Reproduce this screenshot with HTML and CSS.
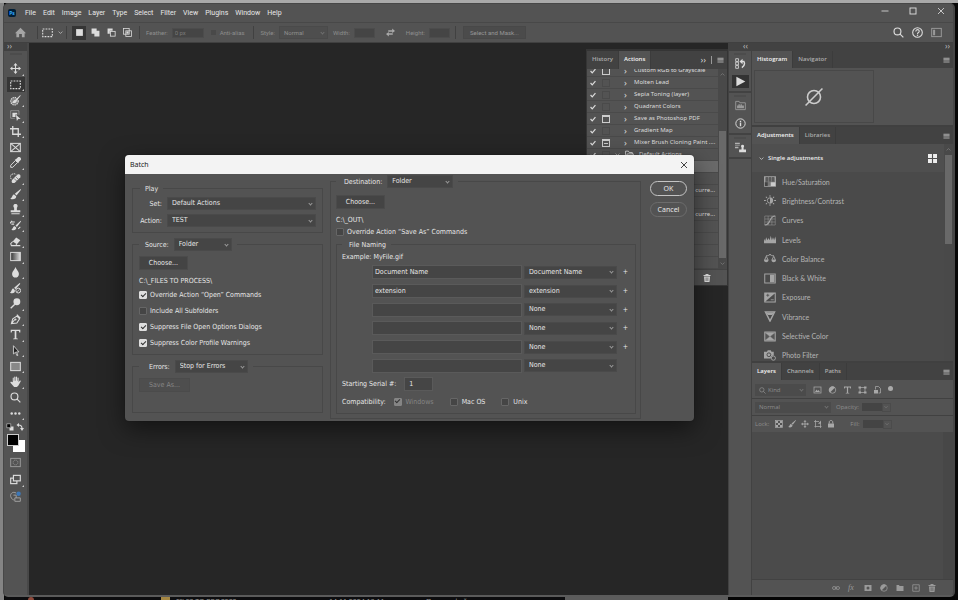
FILE: index.html
```
<!DOCTYPE html>
<html lang="en">
<head>
<meta charset="utf-8">
<title>Batch</title>
<link rel="stylesheet" href="styles.css">
</head>
<body>
<svg class="sprite" aria-hidden="true">
  <symbol id="i-home" viewBox="0 0 16 16"><path d="M8 1 0 9h2v6h4v-5h4v5h4V9h2z" fill="currentColor"/></symbol>
  <symbol id="i-marquee" viewBox="0 0 16 16"><rect x="1" y="3" width="14" height="11" fill="none" stroke="currentColor" stroke-width="1.6" stroke-dasharray="2.6 1.6"/></symbol>
  <symbol id="i-new" viewBox="0 0 16 16"><rect x="2" y="2" width="12" height="12" fill="currentColor"/></symbol>
  <symbol id="i-add" viewBox="0 0 16 16"><path d="M1 1h9v4h5v10H6v-5H1z" fill="currentColor"/></symbol>
  <symbol id="i-sub" viewBox="0 0 16 16"><path d="M1 1h9v4H5v5H1z" fill="currentColor"/><rect x="6" y="6" width="8.500" height="8.500" fill="none" stroke="currentColor" stroke-width="1.500"/></symbol>
  <symbol id="i-cross" viewBox="0 0 16 16"><g fill="none" stroke="currentColor" stroke-width="1.400"><rect x="1" y="1" width="10" height="10"/><rect x="5" y="5" width="10" height="10"/></g><path d="M6 6h4v4H6z" fill="currentColor"/></symbol>
  <symbol id="i-swap" viewBox="0 0 16 16"><path d="M4 4h7V1l5 4.500L11 9V6.500H4zM12 12H5v3l-5-4.500L5 7v2.500h7z" fill="currentColor"/></symbol>
  <symbol id="i-search" viewBox="0 0 16 16"><g fill="none" stroke="currentColor" stroke-width="1.700"><circle cx="6.500" cy="6.500" r="5"/><path d="m10 10 5 5"/></g></symbol>
  <symbol id="i-help" viewBox="0 0 16 16"><g fill="none" stroke="currentColor" stroke-width="1.600"><circle cx="8" cy="8" r="7"/><path d="M5.500 6.500C5.500 3 10.500 3 10.500 6c0 2-2.500 2-2.500 4"/></g><circle cx="8" cy="12" r="1.100" fill="currentColor"/></symbol>
  <symbol id="i-layout" viewBox="0 0 16 16"><rect x="1" y="2" width="14" height="12" fill="none" stroke="currentColor" stroke-width="1.400"/><path d="M3 4h3v8H3z" fill="currentColor"/></symbol>
  <symbol id="i-down" viewBox="0 0 16 16"><path d="m2 5 6 6 6-6" fill="none" stroke="currentColor" stroke-width="2"/></symbol>
  <symbol id="i-close" viewBox="0 0 16 16"><path d="m2 2 12 12M14 2 2 14" fill="none" stroke="currentColor" stroke-width="1.700"/></symbol>
  <symbol id="i-min" viewBox="0 0 16 16"><path d="M1 8h14" fill="none" stroke="currentColor" stroke-width="1.700"/></symbol>
  <symbol id="i-max" viewBox="0 0 16 16"><rect x="2" y="2" width="12" height="12" fill="none" stroke="currentColor" stroke-width="1.900"/></symbol>
  <symbol id="i-menu" viewBox="0 0 16 16"><path d="M1 3h14v2H1zm0 3h14v2H1zm0 3h14v2H1zm0 3h14v1.500H1z" fill="currentColor"/></symbol>

  <symbol id="t-move" viewBox="0 0 16 16"><path d="M8 0 5 3.500h2.200v3.700H3.500V5L0 8l3.500 3V8.800h3.700v3.700H5L8 16l3-3.500H8.800V8.800h3.700V11L16 8l-3.500-3v2.200H8.800V3.500H11z" fill="currentColor"/></symbol>
  <symbol id="t-quick" viewBox="0 0 16 16"><circle cx="6.500" cy="9" r="5.500" fill="currentColor" fill-opacity=".35" stroke="currentColor" stroke-width="1.600" stroke-dasharray="2 1.200"/><path d="M15 0 8 7c-2 0-3 2-5 4 4 2 7 0 7-3l5.500-7z" fill="currentColor"/></symbol>
  <symbol id="t-object" viewBox="0 0 16 16"><path d="M1 1h12v6M7 12H1V1" fill="none" stroke="currentColor" stroke-width="1" opacity=".6"/><path d="M3.500 4h7v3L8 6v4H3.500zM8.500 7l7 6h-3.500L10 16z" fill="currentColor"/></symbol>
  <symbol id="t-crop" viewBox="0 0 16 16"><path d="M4 0v12h12M0 4h12v12" fill="none" stroke="currentColor" stroke-width="1.900"/></symbol>
  <symbol id="t-frame" viewBox="0 0 16 16"><g fill="none" stroke="currentColor" stroke-width="1.500"><rect x="1" y="2" width="14" height="12"/><path d="m1 2 14 12M15 2 1 14"/></g></symbol>
  <symbol id="t-dropper" viewBox="0 0 16 16"><path d="M1 15v-3l7-7 3 3-7 7z" fill="none" stroke="currentColor" stroke-width="1.400"/><path d="m7 4 2-1 3-3c2-1 5 2 4 4l-3 3-1 2z" fill="currentColor"/></symbol>
  <symbol id="t-heal" viewBox="0 0 16 16"><path d="M2 9 0 6l2-4 4-1 3 1" fill="none" stroke="currentColor" stroke-width="1.400" stroke-dasharray="2 1"/><path d="M4 9l7-7c3-1 5 1 4 4l-8 8c-3 2-6-1-4-4z" fill="currentColor"/><path d="m6 8 4 4M9 6l3 3" stroke="#535353"/></symbol>
  <symbol id="t-brush" viewBox="0 0 16 16"><path d="M15.500 0 7 7l2.500 2.500L16 1zM6 8c-3 0-2 4-5.500 6 4 2 9 0 8.500-3.500z" fill="currentColor"/></symbol>
  <symbol id="t-stamp" viewBox="0 0 16 16"><path d="M8 0c3 0 4 3 2 5.500V9h5v3H1V9h5V5.500C4 3 5 0 8 0zM2 13.500h12V15H2z" fill="currentColor"/></symbol>
  <symbol id="t-history" viewBox="0 0 16 16"><path d="M15.500 1 8 8l2 2 6-8zM7 9c-3 0-2 3-5 5 4 2 8 0 7-3z" fill="currentColor"/><path d="M1 3h6M2 6h4M0 5l3-4M12 13l3-3" stroke="currentColor" stroke-width="1.500"/></symbol>
  <symbol id="t-eraser" viewBox="0 0 16 16"><path d="m9 2 6 4-5 6-6-4z" fill="currentColor"/><path d="m4 8-3 3 1 3h6l2-2M8 14h7" fill="none" stroke="currentColor" stroke-width="1.500"/></symbol>
  <linearGradient id="ramp"><stop stop-color="#333"/><stop offset="1" stop-color="#ddd"/></linearGradient>
  <symbol id="t-gradient" viewBox="0 0 16 16"><rect x="1" y="2" width="14" height="12" fill="url(#ramp)" stroke="currentColor" stroke-width="1.400"/></symbol>
  <symbol id="t-drop" viewBox="0 0 16 16"><path d="M8 0c1 4 5 6 5 10 0 7-10 7-10 0 0-4 4-6 5-10z" fill="currentColor"/></symbol>
  <symbol id="t-mixer" viewBox="0 0 16 16"><path d="M14 0 6 7l2 2 7-8zM5 8c-3 0-2 4-5 6 4 2 8 0 7-3.500z" fill="currentColor"/><circle cx="12" cy="11" r="3.500" fill="none" stroke="currentColor" stroke-width="1.400"/><path d="m10 13 4-4" stroke="currentColor"/></symbol>
  <symbol id="t-dodge" viewBox="0 0 16 16"><circle cx="10" cy="5.500" r="5" fill="currentColor"/><path d="m7 9-6 6" stroke="currentColor" stroke-width="2"/></symbol>
  <symbol id="t-pen" viewBox="0 0 16 16"><path d="M2 14 4 7l6-4 4 4-4 6zl5-6M10 1l5 5" fill="none" stroke="currentColor" stroke-width="1.500"/><circle cx="8" cy="8" r="1.500" fill="currentColor"/></symbol>
  <symbol id="t-type" viewBox="0 0 16 16"><path d="M1 1h14v4h-1.500L13 3H9.200v10.500l2.300.5v1H4.500v-1l2.300-.5V3H3l-.5 2H1z" fill="currentColor"/></symbol>
  <symbol id="t-path" viewBox="0 0 16 16"><path d="m5 1 8 9H9.500l2 5-1.500.500-2-5L5 13z" fill="#222" stroke="currentColor" stroke-width="1.200"/></symbol>
  <symbol id="t-rect" viewBox="0 0 16 16"><rect x="1" y="2" width="14" height="12" fill="#888" stroke="currentColor" stroke-width="1.500"/></symbol>
  <symbol id="t-hand" viewBox="0 0 16 16"><path d="M4 9V3c0-1 1.500-1 1.500 0v4h.7V1.500c0-1.200 1.700-1.200 1.700 0V7h.7V1.500c0-1.200 1.700-1 1.700 0V7h.7V3c0-1 1.500-1 1.500 0v6l1.500-2c1-1 2 0 1.500 1L12 14l-2 2H6L1 10c-1-1 0-2 1-1.500z" fill="currentColor"/></symbol>
  <symbol id="t-dots" viewBox="0 0 16 16"><g fill="currentColor"><circle cx="2.500" cy="8" r="1.800"/><circle cx="8" cy="8" r="1.800"/><circle cx="13.500" cy="8" r="1.800"/></g></symbol>
  <symbol id="t-default" viewBox="0 0 16 16"><path d="M7 7h8v8H7z" fill="#ddd"/><path d="M1.500 1.500h8v8h-8z" fill="#000" stroke="#bbb" stroke-width="1.500"/></symbol>
  <symbol id="t-flip" viewBox="0 0 16 16"><path d="M5 4c5 0 7 2 7 7" fill="none" stroke="currentColor" stroke-width="2.200"/><path d="M6 0v8L1 4zM8 10h8l-4 6z" fill="currentColor"/></symbol>
  <symbol id="t-mask" viewBox="0 0 16 16"><rect x="1" y="2" width="14" height="12" fill="none" stroke="currentColor" stroke-width="1.400"/><circle cx="8" cy="8" r="3.500" fill="none" stroke="currentColor" stroke-width="1.300" stroke-dasharray="1.500 1"/></symbol>
  <symbol id="t-screen" viewBox="0 0 16 16"><g fill="#535353" stroke="currentColor" stroke-width="1.700"><rect x="1" y="6" width="9" height="8"/><rect x="5" y="2" width="10" height="8"/></g></symbol>
  <symbol id="t-share" viewBox="0 0 16 16"><path d="M9 3C4 0 0 4 1 8s4 5 5 5M5 6h4v4M7 15v-5h8v5z" fill="none" stroke="#a0a0a0" stroke-width="1.400"/><circle cx="12.500" cy="4" r="3.200" fill="#3d78b8"/></symbol>

  <symbol id="d-history" viewBox="0 0 16 16"><path d="M1 1h4v4H1zm0 5h4v4H1zm0 5h4v4H1z" fill="none" stroke="currentColor" stroke-width="1.200"/><path d="M9 5h4c2 4 0 7-3 9" fill="none" stroke="currentColor" stroke-width="2"/><path d="M11 1v8L6.500 5z" fill="currentColor"/></symbol>
  <symbol id="d-play" viewBox="0 0 16 16"><path d="M2 1v14l13-7z" fill="currentColor"/></symbol>
  <symbol id="d-library" viewBox="0 0 16 16"><path d="M1 14V2h5l1 2h8v10z" fill="none" stroke="currentColor" stroke-width="1.300"/><path d="M3 12V8h2V6h2v2h1V6h2v2h3v4z" fill="currentColor"/></symbol>
  <symbol id="d-info" viewBox="0 0 16 16"><circle cx="8" cy="8" r="6.800" fill="none" stroke="currentColor" stroke-width="1.400"/><path d="M7 7h2v5H7zM7 4h2v2H7z" fill="currentColor"/></symbol>
  <symbol id="d-clone" viewBox="0 0 16 16"><path d="M11 4c2 0 3 2 1.500 4v3H16v4H6v-4h3.500V8C8 6 9 4 11 4z" fill="currentColor"/><path d="M0 1h7v2H0zm0 3h7v1H0zm0 3h5v2H0z" fill="currentColor" opacity=".7"/></symbol>
  <symbol id="i-trash" viewBox="0 0 16 16"><path d="M5 2V0h6v2h4v2H1V2zM2 5h12l-1 11H3z" fill="currentColor"/><path d="M6 7v7M8 7v7M10 7v7" stroke="#555"/></symbol>
  <symbol id="i-folder" viewBox="0 0 16 16"><path d="M1 14V2h5l1.500 2.500H13V7M1 14 4 7h11l-2 7z" fill="none" stroke="currentColor" stroke-width="1.500"/></symbol>
  <symbol id="i-tick" viewBox="0 0 16 16"><path d="m1.500 8 4.500 5L14.500 3" fill="none" stroke="currentColor" stroke-width="3.200"/></symbol>
  <symbol id="i-none" viewBox="0 0 16 16"><g fill="none" stroke="currentColor" stroke-width="1.400"><circle cx="8" cy="8" r="5.800"/><path d="M.5 15.500 15.500.5"/></g></symbol>
  <symbol id="i-grid" viewBox="0 0 16 16"><path d="M0 0h7v7H0zm9 0h7v7H9zM0 9h7v7H0zm9 0h7v7H9z" fill="currentColor"/></symbol>

  <symbol id="a-hue" viewBox="0 0 16 14"><rect x=".7" y=".7" width="14.600" height="12.600" fill="#777" stroke="currentColor" stroke-width="1.300"/><path d="M4 1v6M8 1v6M12 1v6" stroke="#444" stroke-width="1.500"/><path d="M9 8h6v5H9z" fill="#ccc"/><path d="M1 8h4v5H1z" fill="#444"/></symbol>
  <symbol id="a-bright" viewBox="0 0 16 14"><circle cx="8" cy="7" r="3.600" fill="none" stroke="currentColor" stroke-width="1.200"/><path d="M8 3a4 4 0 0 1 0 8z" fill="currentColor"/><path d="M8 0v2M8 12v2M0 7h2.500M13.500 7H16M2.500 2l1.500 1.500M12 10.500l1.500 1.500M2.500 12 4 10.500M12 3.500 13.500 2" stroke="currentColor" stroke-width="1.400"/></symbol>
  <symbol id="a-curves" viewBox="0 0 16 14"><g fill="none" stroke="currentColor"><path d="M1 1h14v12H1zM1 5h14M1 9h14M5.500 1v12M10.500 1v12" opacity=".6"/><path d="M1 13c9 0 5-12 14-12" stroke-width="1.500"/></g></symbol>
  <symbol id="a-levels" viewBox="0 0 16 14"><path d="M0 12V6l1.500 3L3 4l1.500 4L6 5l1.500 3L9 2l1.500 6L12 4l1.500 4L15 3l1 4v5z" fill="currentColor"/></symbol>
  <symbol id="a-balance" viewBox="0 0 16 14"><path d="M3 3c3 1 4-1 5-2 1 1 2 3 5 2M8 1v2M3 4 .8 9h4.700zM13 4l-2.500 5h4.700z" fill="none" stroke="currentColor" stroke-width="1.300"/><path d="M0 9h6c0 4-6 4-6 0zM10 9h6c0 4-6 4-6 0z" fill="currentColor"/></symbol>
  <symbol id="a-bw" viewBox="0 0 16 14"><rect x="1" y="1" width="14" height="12" fill="none" stroke="currentColor" stroke-width="1.300"/><path d="M8 2h6v10H8z" fill="currentColor"/></symbol>
  <symbol id="a-exposure" viewBox="0 0 16 14"><rect x="1" y="1" width="14" height="12" fill="none" stroke="currentColor" stroke-width="1.400"/><path d="M1 13V1h14z" fill="currentColor"/><path d="M3 4h4M5 2v4" stroke="#4a4a4a"/><path d="M9 10h4" stroke="currentColor"/></symbol>
  <symbol id="a-vibrance" viewBox="0 0 16 14"><path d="M2 1h12L8 13z" fill="none" stroke="currentColor" stroke-width="2"/><path d="M3 2h10l-2 3H5z" fill="currentColor"/></symbol>
  <symbol id="a-selective" viewBox="0 0 16 14"><rect x="1" y="1" width="14" height="12" fill="#777" stroke="currentColor" stroke-width="1.300"/><path d="m2 2 6 5 6-5zM2 12l6-5 6 5z" fill="currentColor"/><path d="M2 3v8l5-4zm12 0v8L9 7z" fill="#555"/></symbol>
  <symbol id="a-photo" viewBox="0 0 16 14"><path d="M0 2h4l1-2h4l1 2h3v5a4 4 0 0 0-4 4H0z" fill="currentColor"/><circle cx="6.500" cy="6" r="2.500" fill="none" stroke="#4a4a4a" stroke-width="1.300"/><circle cx="12.500" cy="10.500" r="2.800" fill="none" stroke="currentColor" stroke-width="1.200"/></symbol>

  <symbol id="l-image" viewBox="0 0 16 16"><rect x="1" y="2" width="14" height="12" fill="none" stroke="currentColor" stroke-width="1.500"/><path d="m3 12 3-5 2 3 2-2 3 4z" fill="currentColor"/></symbol>
  <symbol id="l-half" viewBox="0 0 16 16"><circle cx="8" cy="8" r="6.500" fill="none" stroke="currentColor" stroke-width="1.500"/><path d="M3 13A7 7 0 0 1 13 3z" fill="currentColor"/></symbol>
  <symbol id="l-shape" viewBox="0 0 16 16"><path d="M3 3h10v10H3z" fill="none" stroke="currentColor" stroke-width="1.500"/><path d="M0 1h5v4H0zm11 0h5v4h-5zM0 11h5v4H0zm11 0h5v4h-5z" fill="currentColor"/></symbol>
  <symbol id="l-smart" viewBox="0 0 16 16"><path d="M4 7V1h6l4 4v9h-4" fill="none" stroke="currentColor" stroke-width="1.500"/><path d="M1 8h8v7H1z" fill="currentColor"/></symbol>
  <symbol id="l-checker" viewBox="0 0 16 16"><rect x="1" y="1" width="14" height="14" fill="none" stroke="currentColor" stroke-width="1.500"/><path d="M2 2h4v4H2zm8 0h4v4h-4zM6 6h4v4H6zm-4 4h4v4H2zm8 0h4v4h-4z" fill="currentColor"/></symbol>
  <symbol id="l-board" viewBox="0 0 16 16"><path d="M3 0v15M0 3h10M13 6v10M1 13h14" fill="none" stroke="currentColor" stroke-width="1.500"/><path d="m8 8 6-7v6z" fill="currentColor"/></symbol>
  <symbol id="l-lock" viewBox="0 0 16 16"><path d="M4.500 7V4c0-4 7-4 7 0v3" fill="none" stroke="currentColor" stroke-width="2"/><path d="M2 7h12v8H2z" fill="currentColor"/></symbol>
  <symbol id="l-link" viewBox="0 0 16 16"><g fill="none" stroke="currentColor" stroke-width="1.500"><rect x="1" y="5" width="7" height="6" rx="3"/><rect x="8" y="5" width="7" height="6" rx="3"/><path d="M5 8h6"/></g></symbol>
  <symbol id="l-mask" viewBox="0 0 16 16"><path d="M1 2h14v12H1zm7 3a3 3 0 1 0 0 6 3 3 0 0 0 0-6z" fill="currentColor" fill-rule="evenodd"/></symbol>
  <symbol id="l-group" viewBox="0 0 16 16"><path d="M1 2h5l1 2h8v10H1z" fill="currentColor"/></symbol>
  <symbol id="l-plus" viewBox="0 0 16 16"><path d="M1.500 1.500h13v13h-13zM8 4.500v7M4.500 8h7" fill="none" stroke="currentColor" stroke-width="1.500"/></symbol>
</svg>

<div class="desktop">
<div class="app">
  <header class="titlebar">
    <span class="logo">Ps</span>
    <nav class="menus"><a href="#">File</a><a href="#">Edit</a><a href="#">Image</a><a href="#">Layer</a><a href="#">Type</a><a href="#">Select</a><a href="#">Filter</a><a href="#">View</a><a href="#">Plugins</a><a href="#">Window</a><a href="#">Help</a></nav>
    <div class="winbtns">
      <button aria-label="Minimize"><svg><use href="#i-min"/></svg></button>
      <button aria-label="Maximize"><svg><use href="#i-max"/></svg></button>
      <button aria-label="Close"><svg><use href="#i-close"/></svg></button>
    </div>
  </header>

  <div class="options">
    <button class="home" aria-label="Home"><svg><use href="#i-home"/></svg></button>
    <i class="sep"></i>
    <button class="preset" aria-label="Tool preset"><svg><use href="#i-marquee"/></svg><svg class="tiny"><use href="#i-down"/></svg></button>
    <i class="sep"></i>
    <div class="modes">
      <button class="on" aria-label="New selection"><svg><use href="#i-new"/></svg></button>
      <button aria-label="Add"><svg><use href="#i-add"/></svg></button>
      <button aria-label="Subtract"><svg><use href="#i-sub"/></svg></button>
      <button aria-label="Intersect"><svg><use href="#i-cross"/></svg></button>
    </div>
    <i class="sep"></i>
    <label class="dim feather">Feather: <input class="wide" value="0 px" disabled></label>
    <label class="dim anti"><input type="checkbox" disabled>Anti-alias</label>
    <i class="sep"></i>
    <label class="dim style">Style: <span class="pick"><select disabled><option>Normal</option></select></span></label>
    <label class="dim">Width: <input disabled></label>
    <svg class="swap"><use href="#i-swap"/></svg>
    <label class="dim">Height: <input disabled></label>
    <i class="sep"></i>
    <button class="mask" disabled>Select and Mask...</button>
    <div class="util">
      <button aria-label="Search"><svg><use href="#i-search"/></svg></button>
      <button aria-label="Help"><svg><use href="#i-help"/></svg></button>
      <button class="faded" aria-label="Workspace"><svg><use href="#i-layout"/></svg></button>
    </div>
  </div>

  <main class="workspace">
    <aside class="toolbox">
      <div class="strip">››</div>
      <i class="grip"></i>
      <div class="tools">
        <button aria-label="Move"><svg><use href="#t-move"/></svg></button>
        <button class="on" aria-label="Marquee"><svg><use href="#i-marquee"/></svg></button>
        <button aria-label="Quick selection"><svg><use href="#t-quick"/></svg></button>
        <button aria-label="Object selection"><svg><use href="#t-object"/></svg></button>
        <button aria-label="Crop"><svg><use href="#t-crop"/></svg></button>
        <button class="single" aria-label="Frame"><svg><use href="#t-frame"/></svg></button>
        <button aria-label="Eyedropper"><svg><use href="#t-dropper"/></svg></button>
        <button aria-label="Healing brush"><svg><use href="#t-heal"/></svg></button>
        <button aria-label="Brush"><svg><use href="#t-brush"/></svg></button>
        <button aria-label="Clone stamp"><svg><use href="#t-stamp"/></svg></button>
        <button aria-label="History brush"><svg><use href="#t-history"/></svg></button>
        <button aria-label="Eraser"><svg><use href="#t-eraser"/></svg></button>
        <button aria-label="Gradient"><svg><use href="#t-gradient"/></svg></button>
        <button aria-label="Blur"><svg><use href="#t-drop"/></svg></button>
        <button class="single" aria-label="Mixer brush"><svg><use href="#t-mixer"/></svg></button>
        <button aria-label="Dodge"><svg><use href="#t-dodge"/></svg></button>
        <button aria-label="Pen"><svg><use href="#t-pen"/></svg></button>
        <button aria-label="Type"><svg><use href="#t-type"/></svg></button>
        <button aria-label="Path selection"><svg><use href="#t-path"/></svg></button>
        <button aria-label="Rectangle"><svg><use href="#t-rect"/></svg></button>
        <button aria-label="Hand"><svg><use href="#t-hand"/></svg></button>
        <button class="single" aria-label="Zoom"><svg><use href="#i-search"/></svg></button>
        <button aria-label="Edit toolbar"><svg><use href="#t-dots"/></svg></button>
      </div>
      <div class="minis"><svg><use href="#t-default"/></svg><svg><use href="#t-flip"/></svg></div>
      <div class="swatches"><i class="bg"></i><i class="fg"></i></div>
      <div class="modes2">
        <button class="single faded" aria-label="Quick mask"><svg><use href="#t-mask"/></svg></button>
        <button aria-label="Screen mode"><svg><use href="#t-screen"/></svg></button>
        <button class="single" aria-label="Share"><svg><use href="#t-share"/></svg></button>
      </div>
    </aside>

    <section class="canvas">
      <div class="actions">
        <div class="tabs"><button>History</button><button class="on">Actions</button><span class="more">››<i></i><svg><use href="#i-menu"/></svg></span></div>
        <div class="scroller">
          <ul>
            <li><svg class="ck"><use href="#i-tick"/></svg><i class="box full"></i><b>›</b>Custom RGB to Grayscale</li>
            <li><svg class="ck"><use href="#i-tick"/></svg><i class="box"></i><b>›</b>Molten Lead</li>
            <li><svg class="ck"><use href="#i-tick"/></svg><i class="box"></i><b>›</b>Sepia Toning (layer)</li>
            <li><svg class="ck"><use href="#i-tick"/></svg><i class="box"></i><b>›</b>Quadrant Colors</li>
            <li><svg class="ck"><use href="#i-tick"/></svg><i class="box full"></i><b>›</b>Save as Photoshop PDF</li>
            <li><svg class="ck"><use href="#i-tick"/></svg><i class="box"></i><b>›</b>Gradient Map</li>
            <li><svg class="ck"><use href="#i-tick"/></svg><i class="box full dash"></i><b>›</b>Mixer Brush Cloning Paint ....</li>
            <li class="set"><svg class="ck"><use href="#i-tick"/></svg><i class="box"></i><svg class="tiny"><use href="#i-down"/></svg><svg class="fold"><use href="#i-folder"/></svg>Default Actions</li>
            <li class="sel"></li>
            <li></li>
            <li class="tail">curre...</li>
            <li></li>
            <li class="tail">curre...</li>
            <li></li><li></li><li></li><li></li>
          </ul>
          <div class="bar"><svg><use href="#i-down"/></svg><i></i><svg><use href="#i-down"/></svg></div>
        </div>
        <div class="foot"><button aria-label="Delete"><svg><use href="#i-trash"/></svg></button></div>
      </div>
    </section>

    <aside class="dock">
      <div class="strip">‹‹</div>
      <div class="dgroup"><i class="grip"></i><button aria-label="History"><svg><use href="#d-history"/></svg></button><button class="on" aria-label="Actions"><svg><use href="#d-play"/></svg></button></div>
      <div class="dgroup"><i class="grip"></i><button class="faded" aria-label="Libraries"><svg><use href="#d-library"/></svg></button><button aria-label="Info"><svg><use href="#d-info"/></svg></button></div>
      <div class="dgroup"><i class="grip"></i><button aria-label="Clone source"><svg><use href="#d-clone"/></svg></button></div>
    </aside>

    <aside class="panels">
      <div class="strip">››</div>
      <section class="panel">
        <div class="tabs"><button class="on">Histogram</button><button>Navigator</button><svg><use href="#i-menu"/></svg></div>
        <div class="histo"><div><svg><use href="#i-none"/></svg></div></div>
      </section>
      <section class="panel">
        <div class="tabs"><button class="on">Adjustments</button><button>Libraries</button><svg><use href="#i-menu"/></svg></div>
        <div class="adj">
          <div class="adjmain">
            <h2><svg class="tiny"><use href="#i-down"/></svg>Single adjustments<svg class="gridic"><use href="#i-grid"/></svg></h2>
            <ul>
              <li><svg><use href="#a-hue"/></svg>Hue/Saturation</li>
              <li><svg><use href="#a-bright"/></svg>Brightness/Contrast</li>
              <li><svg><use href="#a-curves"/></svg>Curves</li>
              <li><svg><use href="#a-levels"/></svg>Levels</li>
              <li><svg><use href="#a-balance"/></svg>Color Balance</li>
              <li><svg><use href="#a-bw"/></svg>Black &amp; White</li>
              <li><svg><use href="#a-exposure"/></svg>Exposure</li>
              <li><svg><use href="#a-vibrance"/></svg>Vibrance</li>
              <li><svg><use href="#a-selective"/></svg>Selective Color</li>
              <li><svg><use href="#a-photo"/></svg>Photo Filter</li>
            </ul>
          </div>
          <div class="bar"><svg><use href="#i-down"/></svg><i></i></div>
        </div>
      </section>
      <section class="panel layers">
        <div class="tabs"><button class="on">Layers</button><button>Channels</button><button>Paths</button><svg><use href="#i-menu"/></svg></div>
        <div class="lrow kind">
          <label class="find"><svg><use href="#i-search"/></svg><span class="pick"><select aria-label="Filter kind"><option>Kind</option></select></span></label>
          <div class="filters"><svg><use href="#l-image"/></svg><svg><use href="#l-half"/></svg><svg><use href="#t-type"/></svg><svg><use href="#l-shape"/></svg><svg><use href="#l-smart"/></svg><i></i></div>
        </div>
        <div class="lrow blend"><span class="pick"><select aria-label="Blend mode"><option>Normal</option></select></span><label>Opacity: <input disabled></label><i class="drop"><svg><use href="#i-down"/></svg></i></div>
        <div class="lrow locks"><span>Lock:</span><div class="lockset"><svg><use href="#l-checker"/></svg><svg><use href="#t-brush"/></svg><svg><use href="#t-move"/></svg><svg><use href="#l-board"/></svg><svg><use href="#l-lock"/></svg></div><label>Fill: <input disabled></label><i class="drop"><svg><use href="#i-down"/></svg></i></div>
        <div class="empty"></div>
        <div class="lfoot"><svg><use href="#l-link"/></svg><em>fx</em><svg><use href="#l-mask"/></svg><svg><use href="#l-half"/></svg><svg><use href="#l-group"/></svg><svg><use href="#l-plus"/></svg><svg><use href="#i-trash"/></svg></div>
      </section>
    </aside>
  </main>
</div>
<div class="behind"><i class="dot"></i><i class="fic"></i><span class="n1">FILES TO PROCESS</span><span class="n2">14.11.2024 13:11</span><span class="n3">Папка с файлами</span></div>
</div>

<form class="dialog" role="dialog" aria-labelledby="dlg">
  <div class="dtitle"><h1 id="dlg">Batch</h1><button type="button" aria-label="Close"><svg><use href="#i-close"/></svg></button></div>
  <div class="dbody">
    <div class="left">
      <fieldset class="play">
        <legend>Play</legend>
        <div class="line"><label for="set">Set:</label><span class="pick"><select id="set"><option>Default Actions</option></select></span></div>
        <div class="line"><label for="act">Action:</label><span class="pick"><select id="act"><option>TEST</option></select></span></div>
      </fieldset>
      <fieldset class="source">
        <legend><label for="src">Source:</label><span class="pick"><select id="src"><option>Folder</option></select></span></legend>
        <button type="button" class="btn">Choose...</button>
        <p>C:\_FILES TO PROCESS\</p>
        <label class="check"><input type="checkbox" checked>Override Action “Open” Commands</label>
        <label class="check"><input type="checkbox">Include All Subfolders</label>
        <label class="check"><input type="checkbox" checked>Suppress File Open Options Dialogs</label>
        <label class="check"><input type="checkbox" checked>Suppress Color Profile Warnings</label>
      </fieldset>
      <fieldset class="errors">
        <legend><label for="err">Errors:</label><span class="pick"><select id="err"><option>Stop for Errors</option></select></span></legend>
        <button type="button" class="btn" disabled>Save As...</button>
      </fieldset>
    </div>
    <fieldset class="dest">
      <legend><label for="dst">Destination:</label><span class="pick"><select id="dst"><option>Folder</option></select></span></legend>
      <button type="button" class="btn">Choose...</button>
      <p>C:\_OUT\</p>
      <label class="check"><input type="checkbox">Override Action “Save As” Commands</label>
      <fieldset class="naming">
        <legend>File Naming</legend>
        <p>Example: MyFile.gif</p>
        <div class="names">
          <div><input aria-label="Name 1" value="Document Name"><span class="pick"><select aria-label="Part 1"><option>Document Name</option></select></span><b>+</b></div>
          <div><input aria-label="Name 2" value="extension"><span class="pick"><select aria-label="Part 2"><option>extension</option></select></span><b>+</b></div>
          <div><input aria-label="Name 3"><span class="pick"><select aria-label="Part 3"><option>None</option></select></span><b>+</b></div>
          <div><input aria-label="Name 4"><span class="pick"><select aria-label="Part 4"><option>None</option></select></span><b>+</b></div>
          <div><input aria-label="Name 5"><span class="pick"><select aria-label="Part 5"><option>None</option></select></span><b>+</b></div>
          <div><input aria-label="Name 6"><span class="pick"><select aria-label="Part 6"><option>None</option></select></span></div>
        </div>
        <div class="serial"><label for="ser">Starting Serial #:</label><input id="ser" value="1"></div>
        <div class="compat"><span>Compatibility:</span><label class="check off"><input type="checkbox" checked disabled>Windows</label><label class="check"><input type="checkbox">Mac OS</label><label class="check"><input type="checkbox">Unix</label></div>
      </fieldset>
    </fieldset>
    <div class="cmds"><button type="button" class="ok">OK</button><button type="button">Cancel</button></div>
  </div>
</form>
</body>
</html>
```
FILE: styles.css
```
:root {
  --panel: #535353;
  --dark: #424242;
  --field: #454545;
  --text: #dcdcdc;
  --dim: #8e8e8e;
  --ui: "Noto Sans", "Open Sans", sans-serif;
  --menu: Roboto, "Noto Sans", sans-serif;
  --dlg: "DejaVu Sans Condensed", "DejaVu Sans", sans-serif;
  --side: "Open Sans", "Noto Sans", sans-serif;
}
*, ::before, ::after { box-sizing: border-box; }
body { margin: 0; height: 100vh; overflow: hidden; font: 7px/12px var(--ui); color: var(--text); background: #050505; }
button, input, select { font: inherit; color: inherit; margin: 0; padding: 0; border: 0; background: none; border-radius: 0; appearance: none; }
input, select { min-width: 0; opacity: 1; }
select:disabled { opacity: 1; }
ul, p, h1, h2, fieldset { margin: 0; padding: 0; list-style: none; font-weight: 400; font-size: inherit; }
svg { display: block; width: 11px; height: 11px; flex: none; }
svg.tiny { width: 5px; height: 5px; }
.sprite { position: absolute; width: 0; height: 0; }
a { color: inherit; text-decoration: none; }
button { display: flex; align-items: center; justify-content: center; white-space: nowrap; }

.pick { display: grid; align-items: center; background: var(--field); border: 1px solid #4a4a4a; height: 13px; }
.pick select { grid-area: 1 / 1; width: 100%; height: 11px; line-height: 11px; padding: 0 4px; }
.pick::after { content: ""; grid-area: 1 / 1; justify-self: end; width: 3px; height: 3px; margin: 0 3px 1px 0; border: solid #9a9a9a; border-width: 0 1px 1px 0; transform: rotate(45deg); pointer-events: none; }

/* window frame */
.desktop { height: 100vh; display: flex; flex-direction: column; padding: 3px 3px 0 3px; background: linear-gradient(to bottom, #a9a9a9 0 3px, transparent 3px), linear-gradient(to right, #848484 0 4px, #080808 4px); }
.app { flex: 1; min-height: 0; display: flex; flex-direction: column; background: var(--panel); border: 1px solid #474747; border-right-width: 2px; border-bottom: 2px solid #5b5b5b; border-radius: 5px; }
.behind { height: 3px; margin-left: 2px; overflow: hidden; display: flex; line-height: 9px; color: #999; background: linear-gradient(to right, #0d0d0f 0 560px, #5c5c5c 560px 723px, #050505 723px); }
.dot { width: 6px; height: 6px; border-radius: 3px; background: #8f4a3c; margin-left: 23px; }
.fic { width: 9px; height: 4px; background: #a58743; margin: 0 6px 0 127px; }
.n1 { width: 153px; }
.n2 { width: 97px; }

.titlebar { height: 19px; display: flex; align-items: center; border-bottom: 1px solid #484848; }
.logo { width: 8px; height: 8px; margin: 0 9px 0 4px; border-radius: 2px; background: #001e36; color: #31a8ff; font: bold 5px/8px var(--ui); text-align: center; }
.menus { display: flex; gap: 7px; color: #e8e8e8; font-family: var(--menu); }
.winbtns { margin-left: auto; display: flex; gap: 20px; padding: 0 8px 4px 0; }
.winbtns svg { width: 8px; height: 8px; }

.options { height: 20px; display: flex; align-items: center; border-bottom: 1px solid #404040; font-size: 6px; font-family: var(--menu); }
.options .sep { width: 1px; height: 13px; background: #414141; }
.home { width: 33px; color: #a5a5a5; }
.preset { gap: 5px; width: 28px; }
.modes { display: flex; gap: 2px; padding: 0 5px; width: 72px; }
.modes button { width: 14px; height: 14px; }
.modes svg { width: 9px; height: 9px; }
.modes .on { background: #353535; }
.dim { color: var(--dim); display: flex; align-items: center; gap: 4px; white-space: nowrap; }
.options input:not([type]) { width: 21px; height: 10px; background: var(--field); border: 1px solid #4c4c4c; padding: 0 2px; color: #7a7a7a; }
.options input.wide { width: 32px; }
.options input[type=checkbox] { width: 5px; height: 5px; background: #494949; }
.feather { padding-left: 6px; }
.anti { padding: 0 8px 0 7px; }
.style { padding: 0 5px 0 7px; }
.style .pick { width: 49px; background: #4e4e4e; }
.style .pick::after { border-color: #707070; }
.swap { margin: 0 11px; width: 9px; color: #aaa; }
.options .dim + .sep { margin-left: 5px; }
.options .anti + .sep { margin-left: 0; }
.mask { margin-left: 7px; width: 63px; height: 13px; background: #4b4b4b; border: 1px solid #484848; color: #979797; }
.util { margin-left: auto; display: flex; gap: 8px; padding-right: 11px; }
.faded { color: #999; }

.workspace { flex: 1; min-height: 0; display: flex; }
.strip { height: 8px; background: var(--dark); color: #bbb; font: 8px/5px var(--ui); }
.grip { display: block; width: 12px; height: 2px; margin: 2px auto 0; background: #4c4c4c; }

/* tool column */
.toolbox { width: 25px; flex: none; display: flex; flex-direction: column; border-right: 2px solid #484848; }
.toolbox .strip { padding-left: 3px; }
.toolbox .grip { margin-bottom: 6px; }
.tools { height: 360px; display: flex; flex-direction: column; align-items: center; }
.tools button, .modes2 button { width: 18px; flex: 1; position: relative; }
.tools .on { background: #363636; }
.toolbox button::after { content: ""; position: absolute; right: 1px; bottom: 1px; width: 2px; height: 2px; border: 1px solid; border-color: transparent #ccc #ccc transparent; }
.toolbox button.single::after { display: none; }
.minis { display: flex; justify-content: space-between; padding: 2px 3px 0 2px; }
.minis svg { width: 8px; height: 8px; }
.swatches { display: grid; width: 18px; height: 18px; margin: 3px 0 2px 3px; }
.swatches i { grid-area: 1 / 1; width: 12px; height: 12px; }
.swatches .fg { background: #000; border: 1px solid #ccc; }
.swatches .bg { background: #fff; place-self: end; }
.modes2 { height: 51px; display: flex; flex-direction: column; align-items: center; }

.canvas { flex: 1; min-width: 0; background: #262626; position: relative; }

.tabs { display: flex; background: var(--dark); height: 17px; align-items: stretch; font: 600 6px/12px var(--side); }
.tabs button { padding: 0 5px 2px; color: #adadad; border-right: 1px solid #3c3c3c; }
.tabs button.on { background: var(--panel); color: #f4f4f4; }
.tabs > svg { width: 7px; height: 8px; margin: auto 3px auto auto; color: #aaa; }

/* floating actions list */
.actions { position: absolute; right: 0; top: 6px; width: 142px; background: var(--panel); border: 1px solid #353535; border-top: 2px solid #353535; font-size: 6px; }
.actions .tabs { height: 18px; }
.more { margin-left: auto; display: flex; align-items: center; gap: 5px; padding-right: 3px; font-size: 9px; font-weight: 400; }
.more i { width: 1px; height: 8px; background: #999; }
.more svg { width: 7px; height: 8px; color: #aaa; }
.scroller { display: flex; height: 200px; overflow: hidden; align-items: stretch; }
.scroller ul { flex: 1; min-width: 0; display: flex; flex-direction: column; justify-content: flex-end; }
.scroller li { height: 12px; flex: none; display: flex; align-items: center; border-bottom: 1px solid #4a4a4a; white-space: nowrap; line-height: 11px; }
.ck { width: 6px; height: 6px; margin: 0 6px 0 3px; }
.box { width: 8px; height: 8px; flex: none; border: 1px solid #4a4a4a; margin-right: 14px; }
.box.full { border-color: #ccc; border-top-width: 2px; }
.scroller b { width: 10px; flex: none; font-weight: 400; font-size: 9px; }
.box.dash { background: linear-gradient(#ccc, #ccc) center / 4px 1px no-repeat; }
.set .box { margin-right: 5px; }
.fold { width: 9px; height: 9px; margin: 0 5px 0 5px; }
.sel { background: #6a6a6a; }
.scroller .tail { justify-content: flex-end; padding-right: 3px; }
.bar { width: 9px; flex: none; background: #494949; display: flex; flex-direction: column; align-items: center; }
.bar svg { width: 5px; height: 5px; margin: 3px 0; color: #888; }
.bar svg:first-child { transform: scaleY(-1); }
.bar i { width: 7px; background: #696969; }
.scroller .bar i { height: 127px; margin-top: auto; }
.foot { height: 16px; border-top: 1px solid #444; display: flex; justify-content: flex-end; align-items: center; padding-right: 16px; }
.foot svg { width: 8px; height: 8px; }

/* collapsed dock */
.dock { width: 24px; flex: none; border: solid #424242; border-width: 0 1px; }
.dock .strip { text-align: right; padding-right: 3px; }
.dgroup { display: flex; flex-direction: column; align-items: center; border-bottom: 2px solid var(--dark); padding-bottom: 3px; }
.dock button { width: 17px; height: 13px; margin-bottom: 5px; }
.dock .grip { margin-bottom: 2px; }
.dock .on { background: #333; }
.dock button:last-child { margin-bottom: 0; }

/* right panels */
.panels { width: 201px; flex: none; display: flex; flex-direction: column; font-family: var(--side); }
.panels .strip { text-align: right; padding-right: 3px; }
.panels .tabs button { padding-left: 5px; }
.panel { border-bottom: 2px solid #404040; }
.histo { padding: 2px; }
.histo div { width: 120px; height: 53px; border: 1px solid #484848; display: grid; place-items: center; }
.histo svg { width: 18px; height: 18px; color: #ccc; }
.adj { display: flex; height: 217px; overflow: hidden; }
.adjmain { flex: 1; background: #4a4a4a; }
.adj h2 { height: 28px; background: #4f4f4f; display: flex; align-items: center; gap: 4px; padding: 0 7px; font-weight: 600; font-size: 6px; color: #eee; }
.gridic { width: 9px; height: 9px; margin-left: auto; }
.adj ul { height: 193px; display: flex; flex-direction: column; color: #b5b5b5; font-family: Lato, "Open Sans", sans-serif; }
.adj li { flex: 1; display: flex; align-items: center; gap: 6px; padding-left: 12px; }
.adj li svg { width: 12px; color: #a5a5a5; }
.adj .bar i { height: 89px; }
.layers { flex: 1; min-height: 0; border: 0; display: flex; flex-direction: column; color: var(--dim); font-size: 6px; }
.lrow { display: flex; align-items: center; height: 17px; border-bottom: 1px solid #414141; padding: 0 3px; }
.lrow.kind { height: 19px; padding-top: 2px; }
.lrow.locks { border-bottom: 0; height: 16px; }
.layers .pick { background: transparent; border: 0; }
.layers .pick::after { border-color: #707070; }
.find { display: flex; align-items: center; width: 51px; height: 12px; background: #4b4b4b; padding-left: 4px; }
.find svg { width: 7px; height: 7px; }
.find .pick { flex: 1; }
.find select { padding: 0 2px; }
.filters { display: flex; gap: 6px; margin-left: 7px; color: #a8a8a8; }
.filters svg { width: 9px; height: 8px; }
.filters i { width: 5px; height: 5px; border-radius: 3px; background: #aaa; }
.blend .pick { width: 76px; background: #4b4b4b; height: 11px; margin-right: 5px; }
.lrow label:not(.find) { display: flex; align-items: center; gap: 3px; }
.lrow input { width: 20px; height: 8px; background: #444; }
.drop { width: 9px; height: 9px; display: grid; place-items: center; border: 1px solid #4b4b4b; }
.drop svg { width: 4px; height: 4px; }
.lockset { display: flex; gap: 5px; margin: 0 15px 0 6px; color: #a8a8a8; }
.lockset svg { width: 8px; height: 8px; }
.empty { flex: 1; background: #4b4b4b; border-right: 10px solid #474747; }
.lfoot { height: 16px; border-top: 1px solid #424242; display: flex; align-items: center; justify-content: flex-end; gap: 8px; padding-right: 17px; color: #9a9a9a; }
.lfoot svg { width: 8px; height: 8px; }
.lfoot em { width: 8px; font: italic 8px/9px "Liberation Serif", serif; }

/* batch dialog */
.dialog { position: absolute; left: 125px; top: 155px; width: 569px; border-radius: 4px; background: var(--panel); box-shadow: 0 0 1px #111, 0 8px 24px rgba(0, 0, 0, .5); font-family: var(--dlg); color: #e6e6e6; overflow: hidden; }
.dtitle { height: 19px; padding: 0 6px 0 5px; display: flex; align-items: center; justify-content: space-between; background: #f3f3f3; color: #222; font-family: var(--ui); }
.dtitle svg { width: 8px; height: 8px; }
.dbody { display: flex; padding: 0 7px 2px; }
fieldset { border: 1px solid #484848; min-width: 0; }
legend { display: flex; align-items: center; gap: 5px; height: 13px; padding: 0; }
.left { width: 191px; flex: none; padding-top: 8px; display: flex; flex-direction: column; gap: 5px; }
.play legend { padding: 0 5px; margin-left: 7px; }
.play { height: 51px; }
.line { display: grid; grid-template-columns: 29px 149px; gap: 5px; height: 17px; align-items: center; }
.line label { text-align: right; }
.source { padding: 0 6px; height: 117px; }
.source legend { padding: 0 5px 0 6px; }
.source legend .pick { width: 58px; }
.btn { width: 49px; height: 14px; background: #444; border: 1px solid #4b4b4b; }
.source .btn { margin: 5px 0; }
.check { display: flex; align-items: center; gap: 3px; height: 16px; white-space: nowrap; }
.check input { width: 8px; height: 8px; flex: none; border: 1px solid #666; background: #454545; display: grid; place-items: center; border-radius: 1px; }
.check input:checked { background: #dedede; border-color: #dedede; }
.check input:checked::before { content: ""; width: 5px; height: 3px; border: solid #333; border-width: 0 0 1px 1px; transform: translateY(-1px) rotate(-45deg); }
.check.off { color: #858585; }
.check.off input:checked { background: #858585; border-color: #858585; }
.errors { height: 53px; padding: 0 6px; }
.errors legend { padding: 0 5px 0 10px; }
.errors legend .pick { width: 73px; }
.errors .btn { margin-top: 5px; width: 51px; }
.btn:disabled { background: #4e4e4e; color: #858585; }
.dest { width: 311px; margin: 1px 0 0 7px; padding: 0 4px 4px 5px; flex: none; }
.dest > legend { padding: 0 5px 0 8px; }
.dest > legend .pick { width: 66px; }
.dest .btn { margin: 7px 0 5px; }
.dest .check { height: 12px; }
.naming { padding: 0 5px; }
.naming legend { padding: 0 5px 0 7px; }
.names { height: 112px; display: flex; flex-direction: column; margin: 0 0 0 30px; }
.names div { flex: 1; display: grid; grid-template-columns: 150px 93px 9px; gap: 2px; align-items: center; }
.naming input:not([type]) { height: 14px; background: var(--field); border: 1px solid #5a5a5a; padding: 0 2px; }
.names b { font-weight: 400; text-align: right; }
.serial { display: flex; align-items: center; height: 18px; gap: 8px; }
.naming .serial input { width: 29px; padding: 0 4px; }
.compat { display: flex; align-items: center; height: 18px; padding-bottom: 1px; margin-bottom: 2px; }
.compat .check { margin-left: 8px; gap: 4px; }
.compat .check + .check { margin-left: 16px; }
.cmds { margin-left: auto; display: flex; flex-direction: column; gap: 6px; padding-top: 7px; }
.cmds button { width: 37px; height: 15px; border: 1px solid #6c6c6c; border-radius: 8px; font-family: var(--ui); }
.cmds .ok { border-color: #c4c4c4; }
```
